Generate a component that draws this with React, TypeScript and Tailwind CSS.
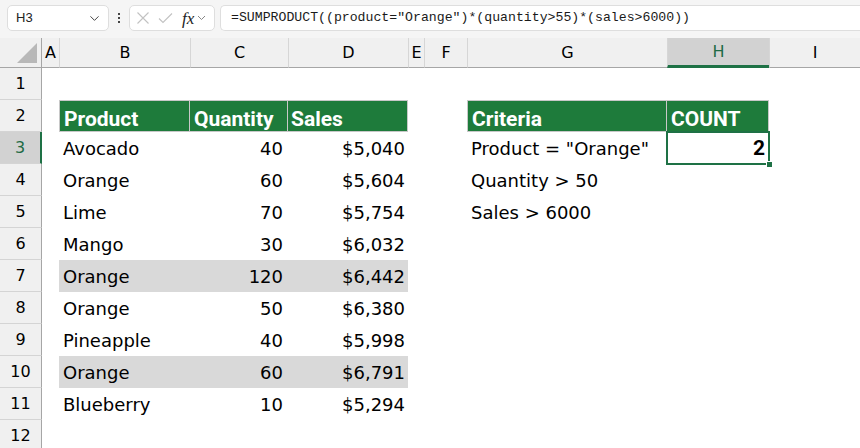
import { ChevronDown } from 'lucide-react'

const cols = ['A', 'B', 'C', 'D', 'E', 'F', 'G', 'H', 'I']

type Row = { product: string; qty: number; sales: string; hl?: boolean }

const data: Row[] = [
  { product: 'Avocado', qty: 40, sales: '$5,040' },
  { product: 'Orange', qty: 60, sales: '$5,604' },
  { product: 'Lime', qty: 70, sales: '$5,754' },
  { product: 'Mango', qty: 30, sales: '$6,032' },
  { product: 'Orange', qty: 120, sales: '$6,442', hl: true },
  { product: 'Orange', qty: 50, sales: '$6,380' },
  { product: 'Pineapple', qty: 40, sales: '$5,998' },
  { product: 'Orange', qty: 60, sales: '$6,791', hl: true },
  { product: 'Blueberry', qty: 10, sales: '$5,294' },
]

const criteria = ['Product = "Orange"', 'Quantity > 50', 'Sales > 6000']

const body = "font-['DejaVu_Sans',sans-serif] text-[18px] text-black"
const head = "font-['Roboto',sans-serif] font-bold text-[21px] leading-[23px] text-white"

function RowHeader({ n }: { n: number }) {
  const active = n === 3
  return (
    <div
      className={`flex items-center justify-center border-b border-[#d4d4d4] font-['DejaVu_Sans',sans-serif] text-[16px] ${
        active ? 'bg-[#d2d2d2] text-[#1e6b45] border-r-2 border-r-[#1e7145]' : 'bg-[#f0f0f0] text-black border-r border-r-[#a6a6a6]'
      }`}
    >
      {n}
    </div>
  )
}

function Toolbar() {
  return (
    <div className="flex h-[38px] items-start bg-[#f5f5f5] pt-[5px]">
      {/* Name box */}
      <div className="ml-[7px] flex h-[26px] w-[102px] items-center justify-between rounded-[5px] border border-[#dedede] bg-white pl-[8px] pr-[6px]">
        <span className="font-['Liberation_Sans',sans-serif] text-[13px] text-[#222]">H3</span>
        <ChevronDown size={15} strokeWidth={1.6} className="text-[#444]" />
      </div>
      <div className="flex h-[26px] w-[20px] flex-col items-center justify-center gap-[2px]">
        <span className="h-[2px] w-[2px] bg-[#444]" />
        <span className="h-[2px] w-[2px] bg-[#444]" />
        <span className="h-[2px] w-[2px] bg-[#444]" />
      </div>
      {/* Cancel / enter / fx */}
      <div className="flex h-[26px] w-[86px] items-center rounded-[5px] border border-[#dedede] bg-white pl-[6px]">
        <svg width="14" height="14" viewBox="0 0 14 14" className="mr-[8px]">
          <path d="M1.5 1.5 L12.5 12.5 M12.5 1.5 L1.5 12.5" stroke="#c2c2c2" strokeWidth="1.1" fill="none" />
        </svg>
        <svg width="15" height="12" viewBox="0 0 15 12" className="mr-[9px]">
          <path d="M1 6.5 L5 10.5 L14 1.5" stroke="#c2c2c2" strokeWidth="1.1" fill="none" />
        </svg>
        <span className="font-['Liberation_Serif',serif] text-[17px] italic leading-none text-[#222]">fx</span>
        <svg width="9" height="6" viewBox="0 0 9 6" className="ml-[3px]">
          <path d="M1 1 L4.5 4.5 L8 1" stroke="#888" strokeWidth="1" fill="none" />
        </svg>
      </div>
      {/* Formula */}
      <div className="ml-[5px] flex h-[26px] flex-1 items-center rounded-l-[5px] border border-r-0 border-[#dedede] bg-white pl-[10px]">
        <span className="whitespace-pre font-['Liberation_Mono',monospace] text-[13.2px] text-[#1a1a1a]">
          =SUMPRODUCT((product="Orange")*(quantity&gt;55)*(sales&gt;6000))
        </span>
      </div>
    </div>
  )
}

export default function App() {
  return (
    <div className="h-[448px] w-[860px] overflow-hidden bg-white">
      <Toolbar />
      <div className="grid grid-cols-[42px_17px_131px_98px_120px_16px_43px_200px_102px_1fr] grid-rows-[30px_repeat(12,32px)]">
        {/* Column headers */}
        <div className="relative border-b border-r border-[#a6a6a6] bg-[#f0f0f0]">
          <svg width="20" height="20" viewBox="0 0 20 20" className="absolute bottom-[4px] right-[4px]">
            <path d="M20 0 L20 20 L0 20 Z" fill="#b8b8b8" />
          </svg>
        </div>
        {cols.map((c, i) => {
          const active = c === 'H'
          return (
            <div
              key={c}
              className={`flex items-center justify-center font-['DejaVu_Sans',sans-serif] text-[16px] ${i > 0 ? 'border-l border-l-[#d6d6d6]' : ''} ${
                active ? 'border-b-[3px] border-b-[#1e7145] bg-[#d2d2d2] text-[#1e6b45]' : 'border-b border-b-[#a6a6a6] bg-[#f0f0f0] text-black'
              }`}
            >
              {c}
            </div>
          )
        })}

        {/* Row 1 */}
        <RowHeader n={1} />
        <div className="col-span-9" />

        {/* Row 2 - headers */}
        <RowHeader n={2} />
        <div />
        <div className={`flex items-end border border-[#c8c8c8] bg-[#1e7b3b] pl-[4px] ${head}`}>Product</div>
        <div className={`flex items-end border-y border-r border-[#c8c8c8] bg-[#1e7b3b] pl-[4px] ${head}`}>Quantity</div>
        <div className={`flex items-end border-y border-r border-[#c8c8c8] bg-[#1e7b3b] pl-[3px] ${head}`}>Sales</div>
        <div />
        <div />
        <div className={`flex items-end border border-[#c8c8c8] bg-[#1e7b3b] pl-[4px] ${head}`}>Criteria</div>
        <div className={`flex items-end border-y border-r border-[#c8c8c8] bg-[#1e7b3b] pl-[4px] ${head}`}>COUNT</div>
        <div />

        {/* Data rows */}
        {data.map((r, i) => {
          const n = i + 3
          const fill = r.hl ? 'bg-[#d9d9d9]' : ''
          return [
            <RowHeader key={`h${n}`} n={n} />,
            <div key={`a${n}`} />,
            <div key={`b${n}`} className={`flex items-end pb-[2px] pl-[4px] ${fill} ${body}`}>{r.product}</div>,
            <div key={`c${n}`} className={`flex items-end justify-end pb-[2px] pr-[5px] ${fill} ${body}`}>{r.qty}</div>,
            <div key={`d${n}`} className={`flex items-end justify-end pb-[2px] pr-[3px] ${fill} ${body}`}>{r.sales}</div>,
            <div key={`e${n}`} />,
            <div key={`f${n}`} />,
            <div key={`g${n}`} className={`flex items-end whitespace-nowrap pb-[2px] pl-[4px] ${body}`}>{criteria[i] ?? ''}</div>,
            n === 3 ? (
              <div key={`hh${n}`} className="relative flex items-end justify-end pr-[4px]">
                <span className="font-['Roboto',sans-serif] text-[21px] font-bold text-black">2</span>
                <div className="absolute -left-px -top-px bottom-[-1px] right-[-1px] border-2 border-[#1e7145]" />
                <div className="absolute bottom-[-4px] right-[-4px] h-[7px] w-[7px] border border-white bg-[#1e7145]" />
              </div>
            ) : (
              <div key={`hh${n}`} />
            ),
            <div key={`i${n}`} />,
          ]
        })}

        {/* Row 12 */}
        <RowHeader n={12} />
        <div className="col-span-9" />
      </div>
    </div>
  )
}
